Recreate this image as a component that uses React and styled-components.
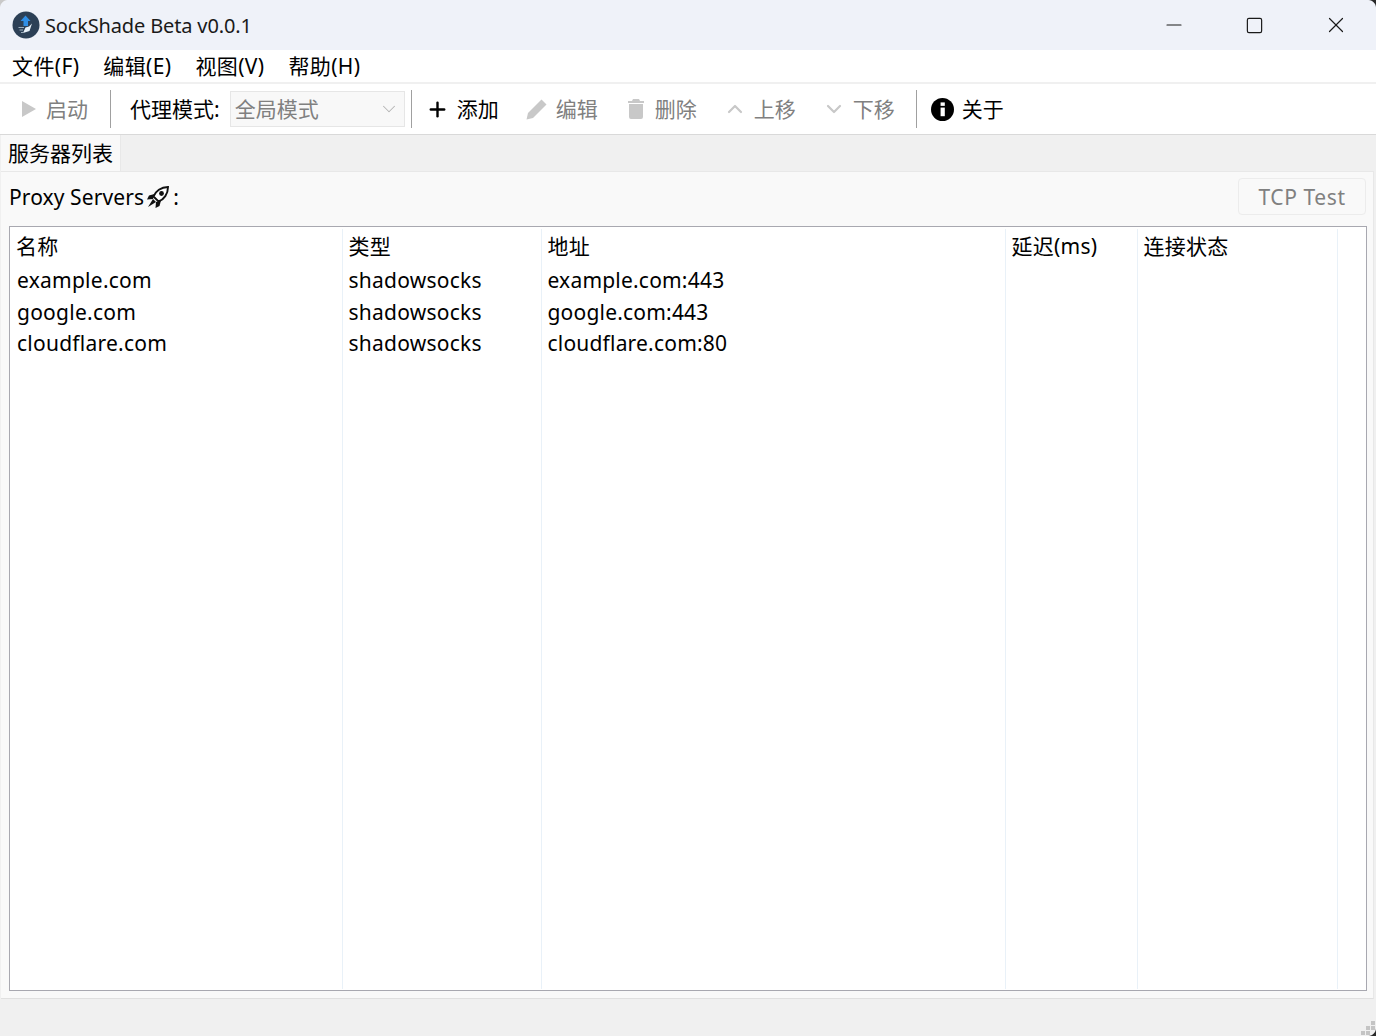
import React from "react";
import styled, { createGlobalStyle } from "styled-components";
import { Plus, Minus, Square, X, ChevronDown, ChevronUp } from "lucide-react";

const FONT = `"Noto Sans", "Noto Sans CJK SC", sans-serif`;

const GlobalStyle = createGlobalStyle`
  html, body { margin: 0; padding: 0; background: #f0f0f0; }
  * { box-sizing: border-box; }
  body { font-family: ${FONT}; color: #000; }
`;

const columns = [
  { title: "名称", width: 332 },
  { title: "类型", width: 199 },
  { title: "地址", width: 464 },
  { title: "延迟(ms)", width: 132 },
  { title: "连接状态", width: 200 },
  { title: "", width: 30 },
];

const servers = [
  ["example.com", "shadowsocks", "example.com:443"],
  ["google.com", "shadowsocks", "google.com:443"],
  ["cloudflare.com", "shadowsocks", "cloudflare.com:80"],
];

const App = () => (
  <Window>
    <GlobalStyle />
    <TitleBar>
      <Logo viewBox="0 0 28 28">
        <circle cx="14" cy="14" r="13.5" fill="#2c4056" />
        <path d="M13.5 4.5 L18.5 10 H16 V15 H11.5 V10 H8.5 Z" fill="#2f8fe6" />
        <path d="M20 12.5 L17.5 20 L11 22 L13.5 16.5 L17 15.5 Z" fill="#e8f2fa" />
        <path d="M6.5 16.5 H12 M7.5 19 H11 M9 21.5 H11" stroke="#a9bccb" strokeWidth="0.9" fill="none" />
      </Logo>
      <WindowTitle>SockShade Beta v0.0.1</WindowTitle>
      <WindowControls>
        <WindowButton><Minus size={24} strokeWidth={1.15} /></WindowButton>
        <WindowButton><Square size={19} strokeWidth={1.5} /></WindowButton>
        <WindowButton><X size={26} strokeWidth={1.1} /></WindowButton>
      </WindowControls>
    </TitleBar>

    <MenuBar>
      <MenuItem>文件(F)</MenuItem>
      <MenuItem>编辑(E)</MenuItem>
      <MenuItem>视图(V)</MenuItem>
      <MenuItem>帮助(H)</MenuItem>
    </MenuBar>

    <ToolBar>
      <ToolButton $disabled>
        <PlayIcon viewBox="0 0 14 16"><path d="M0 0 L14 8 L0 16 Z" fill="#c8c8c8" /></PlayIcon>
        <ToolLabel>启动</ToolLabel>
      </ToolButton>
      <Separator $left={9} $right={19} />
      <ModeLabel><ToolLabel>代理模式:</ToolLabel></ModeLabel>
      <ModeSelect>
        <ToolLabel>全局模式</ToolLabel>
        <ChevronDown size={22} strokeWidth={1.1} color="#b4b4b4" />
      </ModeSelect>
      <Separator $left={6} $right={1} />
      <ToolButton $gap={8}>
        <Plus size={23} strokeWidth={2.5} color="#000" />
        <ToolLabel>添加</ToolLabel>
      </ToolButton>
      <ToolButton $disabled $left={14} $gap={9}>
        <PenIcon viewBox="0 0 21 21">
          <path d="M15.5 0.5 L20.5 5.5 L7 19 L0.5 20.5 L2 14 Z" fill="#c8c8c8" />
        </PenIcon>
        <ToolLabel>编辑</ToolLabel>
      </ToolButton>
      <ToolButton $disabled $left={17} $gap={11}>
        <TrashIcon viewBox="0 0 16 20">
          <path d="M5 0 H11 L12 2 H16 V4 H0 V2 H4 Z M1 5 H15 V18 Q15 20 13 20 H3 Q1 20 1 18 Z" fill="#c8c8c8" />
        </TrashIcon>
        <ToolLabel>删除</ToolLabel>
      </ToolButton>
      <ToolButton $disabled $left={13} $gap={7}>
        <ChevronUp size={24} strokeWidth={2.2} color="#c8c8c8" />
        <ToolLabel>上移</ToolLabel>
      </ToolButton>
      <ToolButton $disabled $left={13} $gap={7}>
        <ChevronDown size={24} strokeWidth={2.2} color="#c8c8c8" />
        <ToolLabel>下移</ToolLabel>
      </ToolButton>
      <Separator $left={8} $right={1} />
      <ToolButton $gap={8}>
        <InfoIcon viewBox="0 0 24 24">
          <circle cx="12" cy="12" r="12" fill="#000" />
          <rect x="10" y="10" width="4.4" height="9" fill="#fff" />
          <rect x="10" y="4.6" width="4.4" height="3.6" fill="#fff" />
        </InfoIcon>
        <ToolLabel>关于</ToolLabel>
      </ToolButton>
    </ToolBar>

    <TabRow>
      <Tab>服务器列表</Tab>
    </TabRow>

    <Panel>
      <PanelHeader>
        <PanelTitle>
          Proxy Servers
          <RocketIcon viewBox="0 0 24 24">
            <path d="M22 2 C15 2 9.5 6 7.5 11.5 L12.5 16.5 C18 14.5 22 9 22 2 Z" fill="#fff" stroke="#111" strokeWidth="1.9" />
            <circle cx="15.5" cy="8.5" r="2.4" fill="#111" />
            <path d="M8.5 9 L3 10.5 L1 14.5 L7 14 Z" fill="#111" />
            <path d="M15 15.5 L13.5 21 L9.5 23 L10 17 Z" fill="#111" />
            <path d="M7 14 L2 22 L10 17 Z" fill="#111" />
          </RocketIcon>
          :
        </PanelTitle>
        <TestButton disabled>TCP Test</TestButton>
      </PanelHeader>

      <TableFrame>
        <ServerTable>
          <colgroup>
            {columns.map((c, i) => <col key={i} width={c.width} />)}
          </colgroup>
          <thead>
            <tr>
              {columns.map((c, i) => <HeadCell key={i}>{c.title}</HeadCell>)}
            </tr>
          </thead>
          <tbody>
            {servers.map((row) => (
              <tr key={row[0]}>
                {columns.map((c, i) => (
                  <Cell key={i} $first={i === 0} $tight={i === 2}>{row[i]}</Cell>
                ))}
              </tr>
            ))}
            <tr>
              {columns.map((c, i) => <FillerCell key={i} />)}
            </tr>
          </tbody>
        </ServerTable>
      </TableFrame>
    </Panel>

    <StatusBar />
    <Grip viewBox="0 0 14 14">
      <path d="M10 0h4v4h-4z M5 5h4v4H5z M10 5h4v4h-4z M0 10h4v4H0z M5 10h4v4H5z" fill="#c4c4c4" />
    </Grip>
    <Corner $top $left $color="#c9c9c9" />
    <Corner $top $color="#2a2a2a" />
    <Corner $color="#2a2a2a" />
  </Window>
);

const Window = styled.div`
  position: relative;
  width: 1376px;
  height: 1036px;
  overflow: hidden;
  display: flex;
  flex-direction: column;
  background: #f0f0f0;
  font-family: ${FONT};
`;

const TitleBar = styled.div`
  height: 50px;
  flex: none;
  display: flex;
  align-items: center;
  padding-left: 12px;
  background: #eff2f9;
`;

const Logo = styled.svg`
  width: 28px;
  height: 28px;
  margin-right: 5px;
`;

const WindowTitle = styled.div`
  font-size: 20px;
  letter-spacing: -0.15px;
  color: #1a1a1a;
`;

const WindowControls = styled.div`
  margin-left: auto;
  display: flex;
`;

const WindowButton = styled.div`
  width: 81px;
  height: 48px;
  display: flex;
  align-items: center;
  justify-content: center;
  color: #1a1a1a;
`;

const MenuBar = styled.div`
  height: 34px;
  flex: none;
  display: flex;
  align-items: center;
  gap: 23.8px;
  padding-left: 12px;
  background: #fff;
  border-bottom: 2px solid #f0f0f0;
  font-size: 21px;
  letter-spacing: 0.4px;
`;

const MenuItem = styled.div`
  line-height: 32px;
`;

const ToolBar = styled.div`
  height: 51px;
  flex: none;
  display: flex;
  align-items: center;
  padding-left: 9px;
  background: #fff;
  border-bottom: 1px solid #d9d9d9;
  font-size: 21px;
`;

const ToolButton = styled.div`
  display: flex;
  align-items: center;
  gap: ${(p) => p.$gap ?? 10}px;
  padding: 0 13px 0 ${(p) => p.$left ?? 13}px;
  height: 38px;
  color: ${(p) => (p.$disabled ? "#808080" : "#000")};
`;

const ToolLabel = styled.span`
  display: block;
  padding-bottom: 3px;
`;

const PlayIcon = styled.svg`
  width: 14px;
  height: 16px;
`;

const PenIcon = styled.svg`
  width: 21px;
  height: 21px;
`;

const TrashIcon = styled.svg`
  width: 16px;
  height: 20px;
`;

const InfoIcon = styled.svg`
  width: 23px;
  height: 23px;
`;

const Separator = styled.div`
  width: 1px;
  height: 38px;
  background: #a0a0a0;
  margin: 0 ${(p) => p.$right}px 0 ${(p) => p.$left}px;
`;

const ModeLabel = styled.div`
  margin-right: 10px;
`;

const ModeSelect = styled.div`
  width: 175px;
  height: 36px;
  display: flex;
  align-items: center;
  justify-content: space-between;
  padding: 0 4px 0 4px;
  background: #f8f8f8;
  border: 1px solid #e6e6e6;
  color: #808080;
`;

const TabRow = styled.div`
  height: 36px;
  flex: none;
  display: flex;
  background: #f0f0f0;
`;

const Tab = styled.div`
  width: 120px;
  margin-left: 1px;
  height: 36px;
  padding-left: 7px;
  line-height: 36px;
  font-size: 21px;
  background: #f9f9f9;
  border-right: 1px solid #e8e8e8;
`;

const Panel = styled.div`
  height: 828px;
  flex: none;
  display: flex;
  flex-direction: column;
  margin: 0 2px 0 1px;
  padding: 0 6px 7px 8px;
  background: #f9f9f9;
  border-top: 1px solid #e8e8e8;
  border-right: 1px solid #e8e8e8;
  border-bottom: 1px solid #e0e0e0;
`;

const PanelHeader = styled.div`
  height: 54px;
  flex: none;
  display: flex;
  align-items: center;
  justify-content: space-between;
  padding-bottom: 5px;
`;

const PanelTitle = styled.div`
  display: flex;
  align-items: center;
  font-size: 21px;
  letter-spacing: 0.1px;
`;

const RocketIcon = styled.svg`
  width: 24px;
  height: 24px;
  margin: 0 3px 0 2px;
`;

const TestButton = styled.button`
  width: 128px;
  height: 37px;
  margin-right: 1px;
  padding: 0;
  background: #f9f9f9;
  border: 1px solid #ececec;
  border-radius: 4px;
  color: #808080;
  font-family: ${FONT};
  font-size: 21px;
  letter-spacing: 0.6px;
`;

const TableFrame = styled.div`
  flex: 1;
  min-height: 0;
  padding: 2px 0 1px;
  background: #fff;
  border: 1px solid #a8a8b0;
`;

const ServerTable = styled.table`
  width: 100%;
  height: 100%;
  table-layout: fixed;
  border-collapse: collapse;
  font-size: 21px;
  letter-spacing: 0.25px;
`;

const HeadCell = styled.th`
  height: 35px;
  padding: 0 0 3px 6px;
  text-align: left;
  font-weight: 400;
  white-space: nowrap;
  border-right: 1px solid #e9f1f8;
  &:last-child { border-right: 0; }
`;

const Cell = styled.td`
  height: 31.8px;
  padding: 0 0 0 ${(p) => (p.$first ? 7 : 6)}px;
  white-space: nowrap;
  letter-spacing: ${(p) => (p.$tight ? "0.2px" : "0.25px")};
  border-right: 1px solid #e9f1f8;
  &:last-child { border-right: 0; }
`;

const FillerCell = styled.td`
  padding: 0;
  border-right: 1px solid #e9f1f8;
  &:last-child { border-right: 0; }
`;

const StatusBar = styled.div`
  flex: 1;
  background: #f0f0f0;
`;

const Grip = styled.svg`
  position: absolute;
  right: 1px;
  bottom: 1px;
  width: 14px;
  height: 14px;
`;

const Corner = styled.div`
  position: absolute;
  width: 8px;
  height: 8px;
  ${(p) => (p.$top ? "top: 0;" : "bottom: 0;")}
  ${(p) => (p.$left ? "left: 0;" : "right: 0;")}
  background: radial-gradient(
    circle at ${(p) => (p.$left ? "100%" : "0")} ${(p) => (p.$top ? "100%" : "0")},
    transparent 7.5px,
    ${(p) => p.$color} 8.5px
  );
`;

export default App;
